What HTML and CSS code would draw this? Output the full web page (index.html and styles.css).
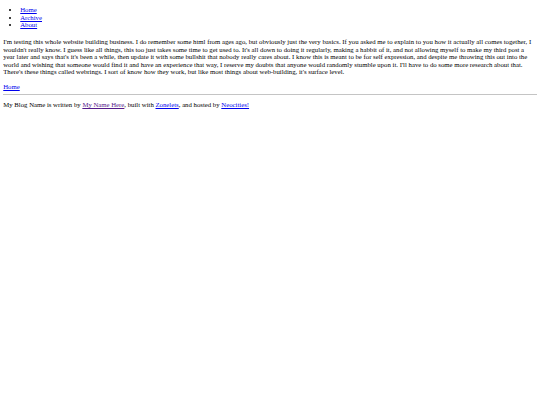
FILE: index.html
```html
<!DOCTYPE html>
<html lang="en">
<head>
<meta charset="utf-8">
<title>My Blog Name</title>
<link rel="stylesheet" href="styles.css">
</head>
<body>
<header class="site-header">
  <ul class="nav">
    <li><a href="#">Home</a></li>
    <li><a href="#">Archive</a></li>
    <li><a href="#">About</a></li>
  </ul>
</header>
<main class="content">
  <p class="post">I'm testing this whole website building business. I do remember some html from ages ago, but obviously just the very basics. If you asked me to explain to you how it actually all comes together, I wouldn't really know. I guess like all things, this too just takes some time to get used to. It's all down to doing it regularly, making a habbit of it, and not allowing myself to make my third post a year later and says that's it's been a while, then update it with some bullshit that nobody really cares about. I know this is meant to be for self expression, and despite me throwing this out into the world and wishing that someone would find it and have an experience that way, I reserve my doubts that anyone would randomly stumble upon it. I'll have to do some more research about that. There's these things called webrings. I sort of know how they work, but like most things about web-building, it's surface level.</p>
</main>
<footer class="site-footer">
  <div class="home-link"><a href="#">Home</a></div>
  <hr class="rule">
  <p class="credits">My Blog Name is written by <a class="visited" href="#">My Name Here</a>, built with <a href="#">Zonelets</a>, and hosted by <a href="#">Neocities!</a></p>
</footer>
</body>
</html>
```
FILE: styles.css
```css
html {
  background: #ffffff;
}
body {
  margin: 0 3.25px;
  font-family: "Liberation Serif", "Times New Roman", serif;
  font-size: 6.75px;
  line-height: 7.5px;
  color: #000000;
}
a {
  color: #0000ee;
  text-decoration: underline;
}
a.visited {
  color: #551a8b;
}
.site-header {
  padding-top: 6.25px;
}
.nav {
  margin: 0 0 9.5px;
  padding-left: 17px;
  list-style: disc;
}
.content {
  margin: 0;
}
.post {
  margin: 0 0 7.25px;
}
.home-link {
  margin: 0;
}
.rule {
  margin: 3.3px 0 6.5px;
  border: 0;
  border-top: 1px solid #c4c4c4;
  height: 0;
}
.credits {
  margin: 0;
}
```
